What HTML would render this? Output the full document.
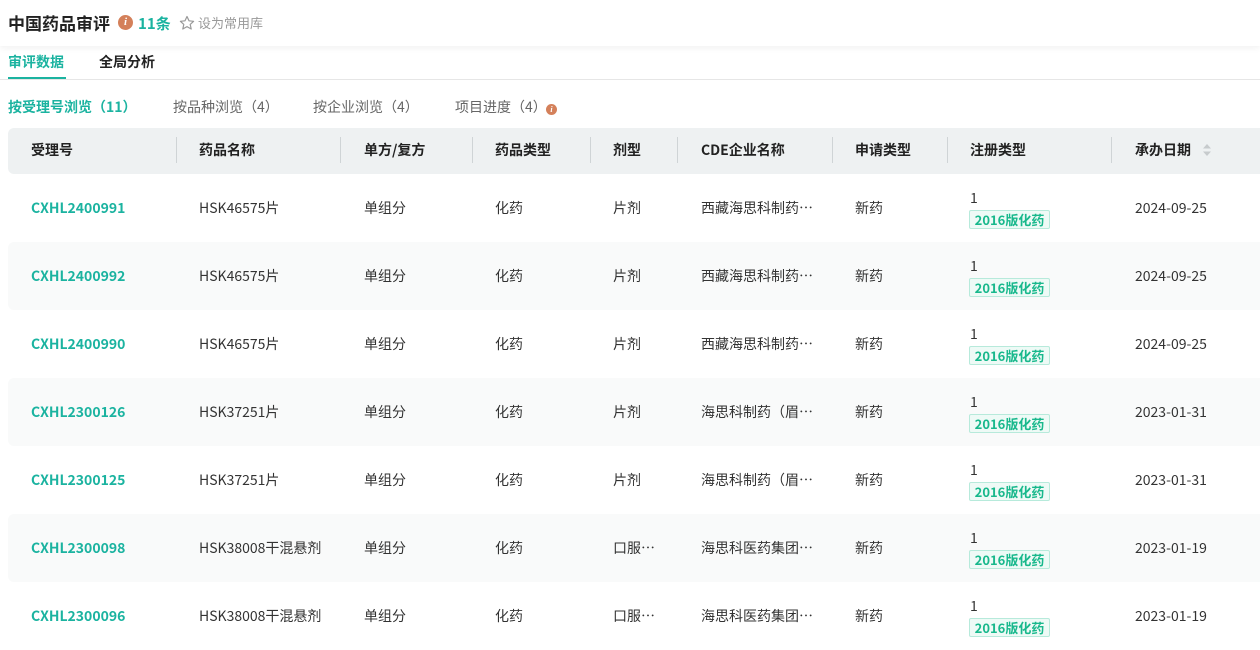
<!DOCTYPE html>
<html><head><meta charset="utf-8"><style>
*{margin:0;padding:0;box-sizing:border-box}
body{width:1260px;height:650px;overflow:hidden;background:#fff;font-family:"Noto Sans CJK SC","Liberation Sans",sans-serif;color:#333;position:relative;line-height:1.45}
.abs{position:absolute;white-space:nowrap}
.top{position:absolute;left:0;top:0;width:1260px;height:46px;box-shadow:0 2px 6px rgba(0,0,0,0.06)}
.teal{color:#1bb3a0}
.hdr{position:absolute;left:8px;top:128px;width:1260px;height:46px;background:#eef1f2;border-radius:6px}
.sep{position:absolute;top:137px;width:1px;height:26px;background:#cfd4d6}
.row{position:absolute;left:8px;width:1260px;height:68px;border-radius:6px}
.tag{position:absolute;height:19px;width:81px;border:1px solid #b7eadb;background:#eefaf6;color:#18b88c;font-size:13px;font-weight:bold;line-height:17px;text-align:center;border-radius:2px}
</style></head><body>
<div class="top"></div>
<div class="abs" style="left:8px;top:11px;font-size:17px;font-weight:bold;color:#222">中国药品审评</div>
<div class="abs" style="left:118px;top:15px;width:15px;height:15px;border-radius:50%;background:#d4805a;color:#fff;font-size:11px;font-weight:bold;font-style:italic;text-align:center;line-height:15px;font-family:'Liberation Serif',serif">i</div>
<div class="abs teal" style="left:138px;top:13px;font-size:15px;font-weight:bold">11条</div>
<svg class="abs" style="left:179px;top:15px" width="16" height="16" viewBox="0 0 16 16"><path d="M8 1.5l2 4.3 4.6.5-3.4 3.1 1 4.6L8 11.6 3.8 14l1-4.6L1.4 6.3 6 5.8z" fill="none" stroke="#999" stroke-width="1.2" stroke-linejoin="round"/></svg>
<div class="abs" style="left:198px;top:14px;font-size:13px;color:#999">设为常用库</div>
<div class="abs teal" style="left:8px;top:52px;font-size:14px;font-weight:bold">审评数据</div>
<div class="abs" style="left:8px;top:77px;width:58px;height:3px;background:#1bb3a0"></div>
<div class="abs" style="left:99px;top:52px;font-size:14px;font-weight:bold;color:#222">全局分析</div>
<div class="abs" style="left:0;top:79px;width:1260px;height:1px;background:#e6e6e6"></div>
<div class="abs teal" style="left:8px;top:97px;font-size:14px;font-weight:bold">按受理号浏览（11）</div>
<div class="abs" style="left:173px;top:97px;font-size:14px;color:#666">按品种浏览（4）</div>
<div class="abs" style="left:313px;top:97px;font-size:14px;color:#666">按企业浏览（4）</div>
<div class="abs" style="left:455px;top:97px;font-size:14px;color:#666">项目进度（4）</div>
<div class="abs" style="left:546px;top:104px;width:11px;height:11px;border-radius:50%;background:#d4805a;color:#fff;font-size:8px;font-weight:bold;font-style:italic;text-align:center;line-height:11px;font-family:'Liberation Serif',serif">i</div>
<div class="hdr"></div>
<div class="sep" style="left:176px"></div><div class="sep" style="left:340px"></div><div class="sep" style="left:472px"></div><div class="sep" style="left:590px"></div><div class="sep" style="left:677px"></div><div class="sep" style="left:832px"></div><div class="sep" style="left:947px"></div><div class="sep" style="left:1111px"></div>
<div style="font-size:14px;font-weight:bold;color:#222">
<div class="abs" style="left:31px;top:140px">受理号</div>
<div class="abs" style="left:199px;top:140px">药品名称</div>
<div class="abs" style="left:364px;top:140px">单方/复方</div>
<div class="abs" style="left:495px;top:140px">药品类型</div>
<div class="abs" style="left:613px;top:140px">剂型</div>
<div class="abs" style="left:701px;top:140px">CDE企业名称</div>
<div class="abs" style="left:855px;top:140px">申请类型</div>
<div class="abs" style="left:970px;top:140px">注册类型</div>
<div class="abs" style="left:1135px;top:140px">承办日期</div>
</div>
<svg class="abs" style="left:1202px;top:142px" width="10" height="16"><path d="M1 6.5L5 2l4 4.5z M1 9.5L5 14l4-4.5z" fill="#c7cbcd"/></svg>
<div id="rows"></div>
<script>
var d=[["CXHL2400991","HSK46575片","片剂","西藏海思科制药…","2024-09-25"],["CXHL2400992","HSK46575片","片剂","西藏海思科制药…","2024-09-25"],["CXHL2400990","HSK46575片","片剂","西藏海思科制药…","2024-09-25"],["CXHL2300126","HSK37251片","片剂","海思科制药（眉…","2023-01-31"],["CXHL2300125","HSK37251片","片剂","海思科制药（眉…","2023-01-31"],["CXHL2300098","HSK38008干混悬剂","口服…","海思科医药集团…","2023-01-19"],["CXHL2300096","HSK38008干混悬剂","口服…","海思科医药集团…","2023-01-19"]];
var h="";
d.forEach(function(r,i){var t=174+i*68;var y=t+24;
if(i%2==1)h+='<div class="row" style="top:'+t+'px;background:#f9fafa"></div>';
var s='font-size:14px;color:#333;top:'+y+'px';
h+='<div class="abs teal" style="left:31px;top:'+y+'px;font-size:14px;font-weight:bold">'+r[0]+'</div>';
h+='<div class="abs" style="left:199px;'+s+'">'+r[1]+'</div>';
h+='<div class="abs" style="left:364px;'+s+'">单组分</div>';
h+='<div class="abs" style="left:495px;'+s+'">化药</div>';
h+='<div class="abs" style="left:613px;'+s+'">'+r[2]+'</div>';
h+='<div class="abs" style="left:701px;'+s+'">'+r[3]+'</div>';
h+='<div class="abs" style="left:855px;'+s+'">新药</div>';
h+='<div class="abs" style="left:970px;font-size:14px;top:'+(t+14)+'px">1</div>';
h+='<div class="tag" style="left:969px;top:'+(t+36)+'px">2016版化药</div>';
h+='<div class="abs" style="left:1135px;'+s+'">'+r[4]+'</div>';});
document.getElementById("rows").innerHTML=h;
</script>
</body></html>
